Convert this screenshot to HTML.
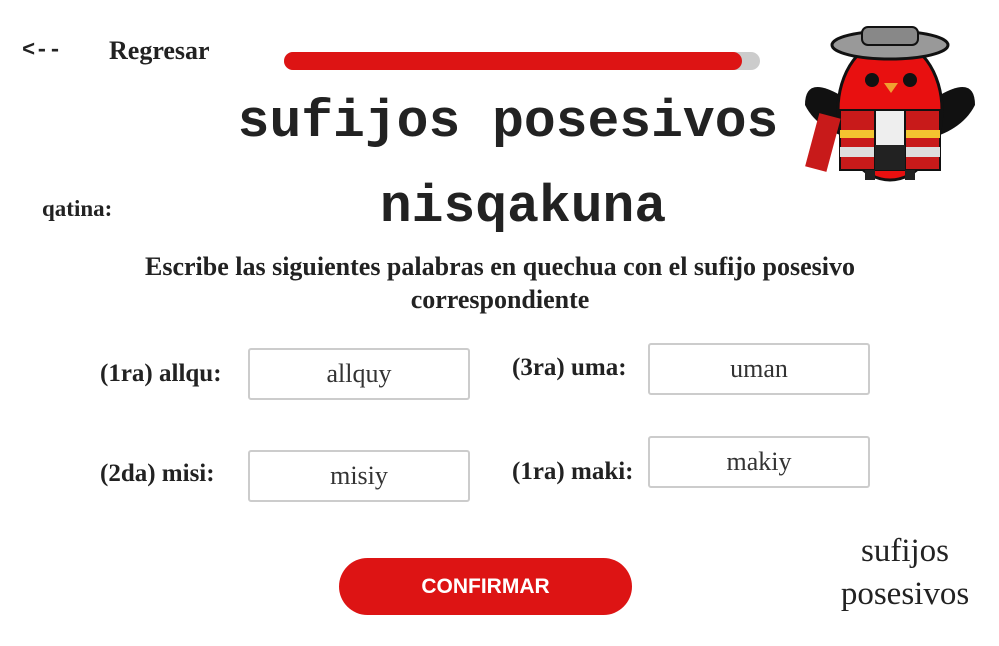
<!DOCTYPE html>
<html><head><meta charset="utf-8"><style>
*{margin:0;padding:0;box-sizing:border-box}
body{width:999px;height:646px;background:#fff;position:relative;overflow:hidden;font-family:"Liberation Serif",serif;color:#222}
.a{position:absolute}
.b{font-weight:bold}
.mono{font-family:"Liberation Mono",monospace;font-size:53px;font-weight:bold;color:#222;text-align:center;white-space:nowrap}
.inp{position:absolute;width:222px;height:52px;border:2px solid #ccc;border-radius:3px;font-size:26px;text-align:center;line-height:48px;color:#333}
.lbl{position:absolute;font-size:25px;font-weight:bold;color:#222}
</style></head><body>
<div class="a" style="left:22px;top:38px;font-family:'Liberation Mono',monospace;font-size:22px;font-weight:bold">&lt;--</div>
<div class="a b" style="left:109px;top:36px;font-size:26px">Regresar</div>
<div class="a" style="left:284px;top:52px;width:476px;height:18px;background:#ccc;border-radius:9px"></div>
<div class="a" style="left:284px;top:52px;width:458px;height:18px;background:#dd1414;border-radius:9px"></div>
<div class="a mono" style="left:208px;top:92px;width:600px">sufijos posesivos</div>
<div class="a mono" style="left:223px;top:177px;width:600px">nisqakuna</div>
<div class="a b" style="left:42px;top:196px;font-size:23px">qatina:</div>
<div class="a b" style="left:50px;top:250px;width:900px;text-align:center;font-size:26px;line-height:33px">Escribe las siguientes palabras en quechua con el sufijo posesivo<br>correspondiente</div>
<div class="lbl" style="left:100px;top:360px">(1ra) allqu:</div>
<div class="inp" style="left:248px;top:348px">allquy</div>
<div class="lbl" style="left:512px;top:354px">(3ra) uma:</div>
<div class="inp" style="left:648px;top:343px">uman</div>
<div class="lbl" style="left:100px;top:460px">(2da) misi:</div>
<div class="inp" style="left:248px;top:450px">misiy</div>
<div class="lbl" style="left:512px;top:458px">(1ra) maki:</div>
<div class="inp" style="left:648px;top:436px">makiy</div>
<div class="a" style="left:339px;top:558px;width:293px;height:57px;background:#dd1414;border-radius:29px;color:#fff;font-family:'Liberation Sans',sans-serif;font-weight:bold;font-size:21px;text-align:center;line-height:57px">CONFIRMAR</div>
<div class="a" style="left:805px;top:530px;width:200px;text-align:center;font-size:33px;line-height:43px">sufijos<br>posesivos</div>
<svg class="a" style="left:800px;top:15px" width="180" height="170" viewBox="0 0 180 170">
<path d="M40 80 Q5 60 5 90 Q15 110 40 120Z" fill="#111"/>
<path d="M140 80 Q175 60 175 90 Q165 110 140 120Z" fill="#111"/>
<ellipse cx="90" cy="95" rx="52" ry="70" fill="#e81010" stroke="#111" stroke-width="3"/>
<ellipse cx="90" cy="30" rx="58" ry="14" fill="#999" stroke="#111" stroke-width="3"/>
<rect x="62" y="12" width="56" height="18" rx="6" fill="#888" stroke="#111" stroke-width="2"/>
<circle cx="72" cy="65" r="7" fill="#111"/><circle cx="110" cy="65" r="7" fill="#111"/>
<path d="M84 68 L98 68 L91 78Z" fill="#f0a030"/>
<path d="M40 95 L140 95 L140 155 L40 155Z" fill="#c81a1a" stroke="#111" stroke-width="2"/>
<rect x="40" y="115" width="100" height="8" fill="#f4c430"/>
<rect x="40" y="132" width="100" height="10" fill="#ddd"/>
<rect x="75" y="95" width="30" height="60" fill="#eee" stroke="#111" stroke-width="2"/>
<rect x="75" y="130" width="30" height="25" fill="#222"/>
<rect x="12" y="100" width="22" height="55" fill="#c81a1a" transform="rotate(15 23 127)"/>
<rect x="65" y="155" width="10" height="10" fill="#222"/><rect x="105" y="155" width="10" height="10" fill="#222"/>
</svg>
</body></html>
